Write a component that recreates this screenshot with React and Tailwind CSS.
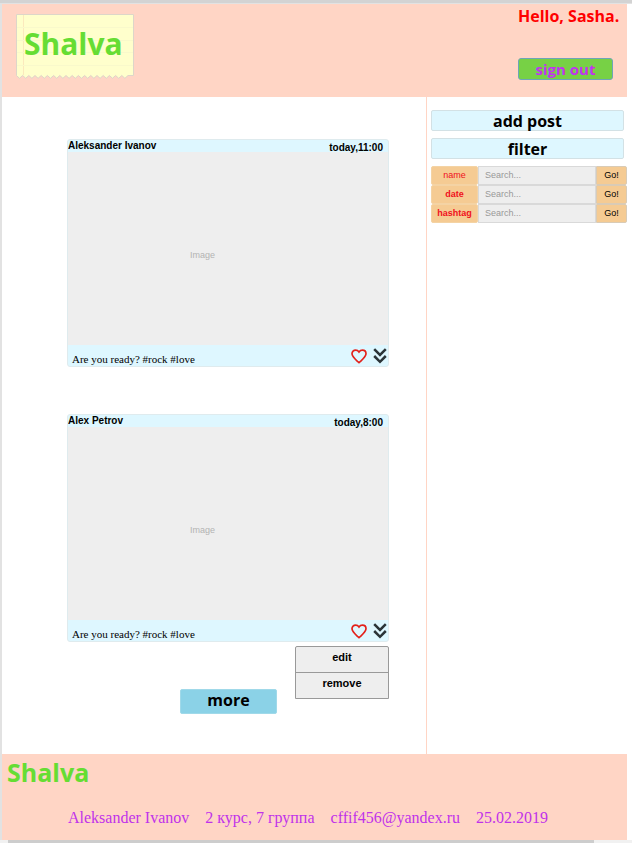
import React from "react";

const display = "font-['Open_Sans','Lato',sans-serif] font-bold";
const arial = "font-['Liberation_Sans',Arial,sans-serif]";

function Ticket() {
  let edge = "M.5 .5H117.5V61.5H112";
  for (let i = 0; i < 18; i++) {
    edge += `l-3.1 2.8l-3.1 -2.8`;
  }
  edge += "L.5 61.5Z";
  return (
    <svg className="col-start-1 row-start-1 h-[66px] w-[118px]" viewBox="0 0 118 66" aria-hidden="true">
      <path d={edge} fill="#ffffcc" stroke="#ddd6c9" />
      <path d="M7.5 1V61" stroke="#fbe9bd" />
      <path d="M1 13.5H117M1 26.5H117M1 38.5H117M1 51.5H117" stroke="#f9f9cb" />
    </svg>
  );
}

function Heart() {
  return (
    <svg className="h-4 w-4" viewBox="0 0 16 16" fill="none" stroke="#e3221c" strokeWidth="1.7" aria-hidden="true">
      <path d="M8 14.6L6.9 13.7C3.2 10.3 1 8.4 1 5.8C1 3.7 2.6 2.2 4.6 2.2C5.9 2.2 7.2 2.9 8 4C8.8 2.9 10.1 2.2 11.4 2.2C13.4 2.2 15 3.7 15 5.8C15 8.4 12.8 10.3 9.1 13.7Z" />
    </svg>
  );
}

function Chevrons() {
  return (
    <svg className="h-4 w-[14px]" viewBox="0 0 14 16" fill="none" stroke="#2b3438" strokeWidth="2.5" aria-hidden="true">
      <path d="M1.2 1.2L7 7L12.8 1.2M1.2 8L7 13.8L12.8 8" />
    </svg>
  );
}

function Post({ author, time }) {
  return (
    <article className={`${arial} overflow-hidden rounded-[3px] border border-[#dfebee] bg-[#def7ff]`}>
      <header className="flex h-3 justify-between pr-[5px] text-[10px] leading-3 font-bold text-black">
        <span>{author}</span>
        <time className="relative z-10 pt-[2px]">{time}</time>
      </header>
      <div className="flex h-[193px] items-center bg-[#eeeeee] pt-[14px] pl-[122px] text-[9px] text-[#b3b3b3]">Image</div>
      <footer className="flex h-[21px] items-center justify-between pr-px pl-1">
        <p className="pt-[6px] font-['Liberation_Serif','Times_New_Roman',serif] text-[11px] leading-3 text-black">Are you ready? #rock #love</p>
        <div className="flex gap-[6px]">
          <button type="button" aria-label="Like"><Heart /></button>
          <button type="button" aria-label="Post menu"><Chevrons /></button>
        </div>
      </footer>
    </article>
  );
}

function SearchRow({ name, bold }) {
  return (
    <form className="flex h-[19px] text-[9px]" onSubmit={(e) => e.preventDefault()}>
      <label htmlFor={name} className={`flex w-[47px] items-center justify-center rounded-[2px] border border-[#f4d3a4] bg-[#f5cb93] text-[#f0101c] ${bold ? "font-bold" : ""}`}>{name}</label>
      <input id={name} type="search" placeholder="Search..." className="min-w-0 flex-1 border border-[#d9d9d9] bg-[#eeeeee] px-[6px] placeholder:text-[#999999]" />
      <button type="submit" className="w-[31px] rounded-r-[2px] border border-[#d9cbb6] bg-[#f5cb93] text-black">Go!</button>
    </form>
  );
}

export default function App() {
  return (
    <div className="border-t-[3px] border-[#d3d3d3] bg-white">
      <div className="border-t border-l-2 border-[#e2e2e2] pr-[5px]">
        <header className="flex h-[93px] justify-between bg-[#ffd5c5]">
          <div className="grid h-[66px] w-[132px] pt-[10px] pl-[14px]">
            <Ticket />
            <h1 className={`${display} z-10 col-start-1 row-start-1 pt-3 pl-2 text-[30px] leading-9 text-[#66dd33]`}>Shalva</h1>
          </div>
          <div className="flex w-[109px] flex-col">
            <p className={`${display} pt-[2px] text-base leading-5 whitespace-nowrap text-[#ff0000]`}>Hello, Sasha.</p>
            <button type="button" className={`${display} mt-8 h-[22px] w-[95px] rounded-[3px] border border-[#6da5b8] bg-[#77d145] text-[15px] leading-5 text-[#c233f0]`}>sign out</button>
          </div>
        </header>
        <div className="flex h-[657px]">
          <main className="flex-1 pt-[42px] pr-[37px] pl-[65px]">
            <Post author="Aleksander Ivanov" time="today,11:00" />
            <div className="relative mt-[47px]">
              <Post author="Alex Petrov" time="today,8:00" />
              <div className={`${arial} absolute top-full right-0 mt-1 flex w-[94px] flex-col divide-y divide-[#999999] rounded-t-[2px] border border-[#999999] bg-[#eeeeee] text-[11px] font-bold text-black`}>
                <button type="button" className="h-[26px] pb-1">edit</button>
                <button type="button" className="h-[25px] pb-1">remove</button>
              </div>
            </div>
            <button type="button" className={`${display} mt-[47px] ml-[113px] block h-[25px] w-[97px] rounded-[2px] border border-[#a0d9e9] bg-[#8bd2e7] pb-1 text-base leading-5 text-black`}>more</button>
          </main>
          <aside className={`${arial} w-[201px] border-l border-[#ffd5c5] pt-[13px] pl-1`}>
            <div className="flex flex-col gap-[7px] pr-[3px]">
              <button type="button" className={`${display} h-[21px] rounded-[2px] border border-[#d3e1e5] bg-[#def7ff] text-base leading-[18px] text-black`}>add post</button>
              <button type="button" className={`${display} h-[21px] rounded-[2px] border border-[#d3e1e5] bg-[#def7ff] text-base leading-[18px] text-black`}>filter</button>
            </div>
            <div className="pt-[7px]">
              <SearchRow name="name" />
              <SearchRow name="date" bold />
              <SearchRow name="hashtag" bold />
            </div>
          </aside>
        </div>
        <footer className="h-[86px] bg-[#ffd5c5]">
          <p className={`${display} pt-[2px] pl-[5px] text-[25px] leading-8 text-[#66dd33]`}>Shalva</p>
          <div className="flex gap-4 pt-5 pl-[66px] font-['Liberation_Serif',Georgia,serif] text-base leading-5 whitespace-nowrap text-[#bf32ea]">
            <span>Aleksander Ivanov</span>
            <span>2 курс, 7 группа</span>
            <a href="mailto:cffif456@yandex.ru">cffif456@yandex.ru</a>
            <span>25.02.2019</span>
          </div>
        </footer>
      </div>
      <div className="h-[3px] bg-[#f1f1f1] pr-[38px] pl-2">
        <div className="h-full bg-[#cdcdcd]" />
      </div>
    </div>
  );
}
